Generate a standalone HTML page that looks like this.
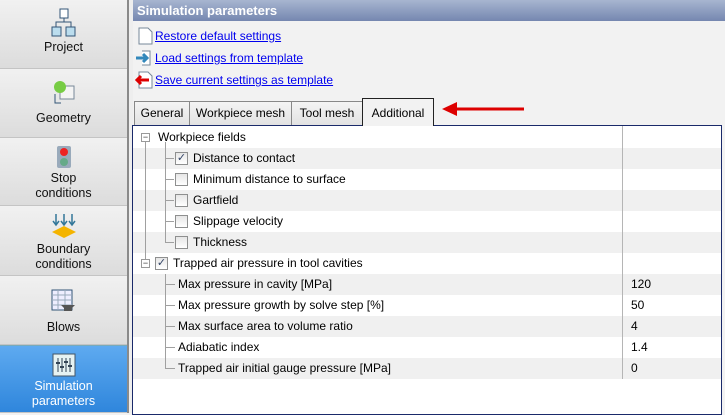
<!DOCTYPE html><html><head><style>
*{margin:0;padding:0;box-sizing:border-box}
body{width:725px;height:413px;overflow:hidden;background:#f2f2f2;font-family:"Liberation Sans",sans-serif;font-size:12px;position:relative;color:#000}
.sb{position:absolute;left:0;top:0;width:127px;height:413px;background:#e6e6e6}
.btn{position:absolute;left:0;width:127px;background:linear-gradient(#f1f1f1,#dcdcdc);border-bottom:1px solid #c4c4c4;text-align:center;font-size:12.5px;line-height:15px;color:#111}
.btn svg{display:block;margin:0 auto}
.sel{background:linear-gradient(#5eaaf0,#2f86dc);color:#fff;border-top:1px solid #7ab}
.sep{position:absolute;left:127px;top:0;width:6px;height:413px;background:#eee;border-left:2px solid #8a8a8a}
.title{position:absolute;left:133px;top:0;width:592px;height:21px;background:linear-gradient(#a7b5d0,#7587b0);color:#fff;font-weight:bold;font-size:13px;line-height:21px;padding-left:4px}
.lnk{position:absolute;left:155px;color:#0000ee;text-decoration:underline;font-size:12px}
.tab{position:absolute;top:101px;height:24px;border:1px solid #888;border-bottom:none;background:linear-gradient(#f4f4f4,#e2e2e2);line-height:23px;text-align:center;font-size:12px}
.box{position:absolute;left:132px;top:125px;width:590px;height:290px;border:1px solid #1a2a6a;background:#fff}
.row{position:absolute;left:0;width:588px;height:21px;line-height:21px;font-size:12px}
.g{background:#f0f0f0}
.cb{position:absolute;top:4px;width:13px;height:13px;border:1px solid #8e8f8f;background:linear-gradient(#e6e6e6,#fff)}
.v{position:absolute;left:498px}
.vl{position:absolute;left:489px;top:0;width:1px;height:303px;background:#b5b5b5}
.tl{position:absolute;background:#a0a0a0}
</style></head><body>
<div class="sb">
<div class="btn" style="top:0;height:69px;padding-top:8px"><svg width="26" height="30" viewBox="0 0 26 30"><rect x="9" y="1" width="8" height="9" fill="#fff" stroke="#357"/><rect x="1" y="19" width="9" height="9" fill="#bde" stroke="#357"/><rect x="15" y="19" width="9" height="9" fill="#bde" stroke="#357"/><path d="M13 10v4H5v5M13 14h7v5" fill="none" stroke="#357"/></svg><div style="margin-top:2px">Project</div></div>
<div class="btn" style="top:69px;height:69px;padding-top:11px"><svg width="26" height="28" viewBox="0 0 26 28"><rect x="9" y="6" width="14" height="13" fill="#f4f4f4" stroke="#789"/><circle cx="9" cy="7" r="6" fill="#7c4"/><path d="M4 14v9h6" fill="none" stroke="#357"/></svg><div style="margin-top:3px">Geometry</div></div>
<div class="btn" style="top:138px;height:68px;padding-top:7px"><svg width="16" height="24" viewBox="0 0 16 24"><rect x="1" y="1" width="14" height="22" rx="2" fill="#9ab"/><circle cx="8" cy="7" r="4" fill="#e22"/><circle cx="8" cy="17" r="4" fill="#6a8"/></svg><div style="margin-top:2px">Stop<br>conditions</div></div>
<div class="btn" style="top:206px;height:70px;padding-top:6px"><svg width="26" height="28" viewBox="0 0 26 28"><path d="M13 14l12 6-12 6-12-6z" fill="#f4b400"/><path d="M5 2v10M13 2v10M21 2v10M2 9l3 4 3-4M10 9l3 4 3-4M18 9l3 4 3-4" fill="none" stroke="#379" stroke-width="1.5"/></svg><div style="margin-top:2px">Boundary<br>conditions</div></div>
<div class="btn" style="top:276px;height:69px;padding-top:13px"><svg width="26" height="26" viewBox="0 0 26 26"><rect x="1" y="1" width="20" height="20" fill="#eef" stroke="#357"/><path d="M1 6h20M1 11h20M1 16h20M7 1v20M14 1v20" stroke="#9ab"/><path d="M10 16h14l-3 3v3h-8v-3z" fill="#555"/></svg><div style="margin-top:5px">Blows</div></div>
<div class="btn sel" style="top:345px;height:68px;padding-top:7px"><svg width="24" height="24" viewBox="0 0 24 24"><rect x="1" y="1" width="22" height="22" fill="#e6f2f2" stroke="#456"/><path d="M6 5v14M10 5v14M14 5v14M18 5v14" stroke="#345"/><path d="M4 10h4M8 14h4M12 9h4M16 13h4" stroke="#345" stroke-width="2"/></svg><div style="margin-top:2px">Simulation<br>parameters</div></div>
</div>
<div class="sep"></div>
<div class="title">Simulation parameters</div>
<svg style="position:absolute;left:138px;top:27px" width="15" height="18"><path d="M1 1h9l4 4v12H1z" fill="#fff" stroke="#789"/></svg>
<div class="lnk" style="top:29px">Restore default settings</div>
<svg style="position:absolute;left:135px;top:50px" width="18" height="16"><path d="M7 1h8v14H7" fill="#fff" stroke="#789"/><path d="M1 8h11M8 4l4 4-4 4" stroke="#38b" stroke-width="3" fill="none"/></svg>
<div class="lnk" style="top:51px">Load settings from template</div>
<svg style="position:absolute;left:135px;top:71px" width="18" height="18"><path d="M4 1h9l4 4v12H4z" fill="#fff" stroke="#789"/><path d="M14 9H3M6 5l-4 4 4 4" stroke="#d00" stroke-width="3" fill="none"/></svg>
<div class="lnk" style="top:73px">Save current settings as template</div>
<div class="tab" style="left:134px;width:56px">General</div>
<div class="tab" style="left:189px;width:103px">Workpiece mesh</div>
<div class="tab" style="left:291px;width:72px">Tool mesh</div>
<div class="tab" style="left:362px;top:98px;height:28px;width:72px;border-color:#222;background:#f2f2f2;line-height:29px;z-index:2">Additional</div>
<svg style="position:absolute;left:442px;top:102px" width="84" height="14"><path d="M82 7H12" stroke="#d00" stroke-width="3"/><path d="M0 7l15-7v14z" fill="#d00"/></svg>
<div class="box">
<div class="row" style="top:1px"><span style="position:absolute;left:25px">Workpiece fields</span></div>
<div class="row g" style="top:22px"><span style="position:absolute;left:60px">Distance to contact</span></div>
<div class="row" style="top:43px"><span style="position:absolute;left:60px">Minimum distance to surface</span></div>
<div class="row g" style="top:64px"><span style="position:absolute;left:60px">Gartfield</span></div>
<div class="row" style="top:85px"><span style="position:absolute;left:60px">Slippage velocity</span></div>
<div class="row g" style="top:106px"><span style="position:absolute;left:60px">Thickness</span></div>
<div class="row" style="top:127px"><span style="position:absolute;left:40px">Trapped air pressure in tool cavities</span></div>
<div class="row g" style="top:148px"><span style="position:absolute;left:45px">Max pressure in cavity [MPa]</span><span class="v">120</span></div>
<div class="row" style="top:169px"><span style="position:absolute;left:45px">Max pressure growth by solve step [%]</span><span class="v">50</span></div>
<div class="row g" style="top:190px"><span style="position:absolute;left:45px">Max surface area to volume ratio</span><span class="v">4</span></div>
<div class="row" style="top:211px"><span style="position:absolute;left:45px">Adiabatic index</span><span class="v">1.4</span></div>
<div class="row g" style="top:232px"><span style="position:absolute;left:45px">Trapped air initial gauge pressure [MPa]</span><span class="v">0</span></div>
<div class="vl" style="top:0;height:253px"></div>
<div class="tl" style="left:12px;top:16px;width:1px;height:122px"></div>
<div class="tl" style="left:32px;top:16px;width:1px;height:101px"></div>
<div class="tl" style="left:32px;top:32px;width:9px;height:1px"></div>
<div class="tl" style="left:32px;top:53px;width:9px;height:1px"></div>
<div class="tl" style="left:32px;top:74px;width:9px;height:1px"></div>
<div class="tl" style="left:32px;top:95px;width:9px;height:1px"></div>
<div class="tl" style="left:32px;top:116px;width:9px;height:1px"></div>
<div class="tl" style="left:32px;top:148px;width:1px;height:95px"></div>
<div class="tl" style="left:32px;top:158px;width:10px;height:1px"></div>
<div class="tl" style="left:32px;top:179px;width:10px;height:1px"></div>
<div class="tl" style="left:32px;top:200px;width:10px;height:1px"></div>
<div class="tl" style="left:32px;top:221px;width:10px;height:1px"></div>
<div class="tl" style="left:32px;top:242px;width:10px;height:1px"></div>
<div style="position:absolute;left:8px;top:7px;width:9px;height:9px;border:1px solid #999;background:#fff;font-size:9px;line-height:6px;text-align:center;color:#333">−</div>
<div style="position:absolute;left:8px;top:133px;width:9px;height:9px;border:1px solid #999;background:#fff;font-size:9px;line-height:6px;text-align:center;color:#333">−</div>
<div class="cb" style="left:42px;top:26px;color:#346;font-size:11px;line-height:11px;text-align:center">✓</div>
<div class="cb" style="left:42px;top:47px"></div>
<div class="cb" style="left:42px;top:68px"></div>
<div class="cb" style="left:42px;top:89px"></div>
<div class="cb" style="left:42px;top:110px"></div>
<div class="cb" style="left:22px;top:131px;color:#346;font-size:11px;line-height:11px;text-align:center">✓</div>
</div>
</body></html>
